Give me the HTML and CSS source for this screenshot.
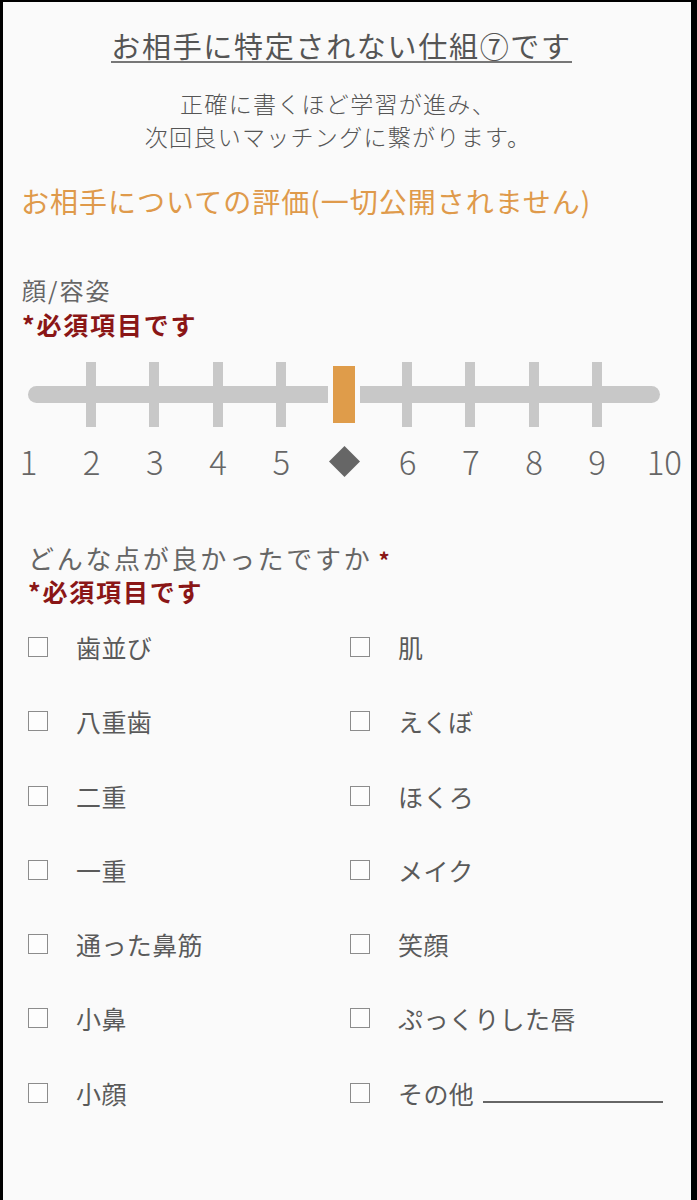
FILE: index.html
```html
<!DOCTYPE html>
<html lang="ja">
<head>
<meta charset="utf-8">
<title>評価</title>
<link rel="stylesheet" href="styles.css">
</head>
<body>
<div class="page">
  <header class="intro">
    <h1 class="title"><span>お相手に特定されない仕組⑦です</span></h1>
    <p class="lead">正確に書くほど学習が進み、<br>次回良いマッチングに繋がります。</p>
  </header>

  <h2 class="section">お相手についての評価(一切公開されません)</h2>

  <section class="field">
    <div class="label">顔/容姿</div>
    <div class="req req1">*必須項目です</div>
    <div class="slider">
      <span class="slot"></span>
      <span class="slot"><i class="tick"></i></span>
      <span class="slot"><i class="tick"></i></span>
      <span class="slot"><i class="tick"></i></span>
      <span class="slot"><i class="tick"></i></span>
      <span class="slot"><i class="thumb"></i></span>
      <span class="slot"><i class="tick"></i></span>
      <span class="slot"><i class="tick"></i></span>
      <span class="slot"><i class="tick"></i></span>
      <span class="slot"><i class="tick"></i></span>
      <span class="slot"></span>
    </div>
    <div class="scale">
      <span class="num">1</span>
      <span class="num">2</span>
      <span class="num">3</span>
      <span class="num">4</span>
      <span class="num">5</span>
      <span class="num"><svg class="diamond" width="31" height="31" viewBox="0 0 31 31"><polygon points="15.5,0 31,15.5 15.5,31 0,15.5" fill="#666"/></svg></span>
      <span class="num">6</span>
      <span class="num">7</span>
      <span class="num">8</span>
      <span class="num">9</span>
      <span class="num last">10</span>
    </div>
  </section>

  <section class="field checks-field">
    <div class="question">どんな点が良かったですか<span class="star">*</span></div>
    <div class="req req2">*必須項目です</div>
    <div class="checks">
      <label class="check"><span class="box"></span>歯並び</label>
      <label class="check"><span class="box"></span>肌</label>
      <label class="check"><span class="box"></span>八重歯</label>
      <label class="check"><span class="box"></span>えくぼ</label>
      <label class="check"><span class="box"></span>二重</label>
      <label class="check"><span class="box"></span>ほくろ</label>
      <label class="check"><span class="box"></span>一重</label>
      <label class="check"><span class="box"></span>メイク</label>
      <label class="check"><span class="box"></span>通った鼻筋</label>
      <label class="check"><span class="box"></span>笑顔</label>
      <label class="check"><span class="box"></span>小鼻</label>
      <label class="check"><span class="box"></span>ぷっくりした唇</label>
      <label class="check"><span class="box"></span>小顔</label>
      <label class="check"><span class="box"></span>その他<span class="blank"></span></label>
    </div>
  </section>
</div>
</body>
</html>
```

FILE: styles.css
```css
* { box-sizing: border-box; }

html, body {
  margin: 0;
  padding: 0;
  background: #000;
}

body {
  font-family: "Noto Sans CJK JP", "Noto Sans", sans-serif;
  color: #5c5c5c;
}

.page {
  margin: 2px 6px 0 3px;
  height: 1198px;
  overflow: hidden;
  background: #fafafa;
  padding-top: 27px;
}

.intro {
  text-align: center;
  padding-right: 11px;
}

.title {
  margin: 0;
  font-size: 29px;
  font-weight: 400;
  line-height: 32px;
  letter-spacing: 1.7px;
  color: #555;
}

.title span {
  display: inline-block;
  border-bottom: 2px solid #777;
}

.lead {
  margin: 24px 0 0;
  padding-right: 7px;
  font-size: 23px;
  font-weight: 300;
  line-height: 33px;
  letter-spacing: 1.3px;
  color: #555;
}

.section {
  margin: 30px 0 0 18px;
  font-size: 28px;
  font-weight: 400;
  line-height: 36px;
  letter-spacing: 1px;
  color: #df9a4b;
}

.field {
  margin-top: 55px;
}

.label {
  margin-left: 19px;
  font-size: 24px;
  line-height: 32px;
  letter-spacing: 2px;
  color: #666;
}

.req {
  margin-left: 19px;
  font-size: 25px;
  font-weight: 700;
  line-height: 32px;
  letter-spacing: 1.8px;
  color: #8a1616;
}

.req1 {
  margin-top: 2px;
}

.slider {
  position: relative;
  margin: 21px 0 0 9px;
  width: 664px;
  height: 66px;
  display: flex;
  justify-content: space-between;
  align-items: center;
}

.slider::before {
  content: "";
  position: absolute;
  left: 16px;
  right: 16px;
  top: 25px;
  height: 17px;
  border-radius: 9px;
  background: #c8c8c8;
}

.slot {
  position: relative;
  width: 32px;
  height: 66px;
  display: flex;
  justify-content: center;
  align-items: center;
}

.tick {
  display: block;
  width: 10px;
  height: 65px;
  background: #c8c8c8;
}

.thumb {
  display: block;
  width: 32px;
  height: 67px;
  background: #df9c4a;
  border: 5px solid #fafafa;
}

.scale {
  margin: 14px 0 0 5.5px;
  width: 672px;
  display: flex;
  justify-content: space-between;
  align-items: center;
  height: 40px;
}

.num {
  width: 40px;
  text-align: center;
  font-size: 33px;
  font-weight: 300;
  line-height: 40px;
  color: #666;
  display: flex;
  justify-content: center;
  align-items: center;
}

.num.last {
  padding-left: 8px;
}

.diamond {
  display: block;
}

.checks-field {
  margin-top: 61px;
}

.question {
  margin-left: 25px;
  font-size: 26px;
  line-height: 32px;
  letter-spacing: 2.7px;
  color: #666;
}

.star {
  margin-left: 6px;
  font-size: 22px;
  font-weight: 700;
  color: #8a1616;
}

.req2 {
  margin-left: 25px;
}

.checks {
  margin: 23px 0 0 25px;
  display: grid;
  grid-template-columns: 322px 1fr;
  row-gap: 40.3px;
}

.check {
  display: flex;
  align-items: center;
  height: 34px;
  font-size: 25px;
  letter-spacing: 0.4px;
  color: #5a5a5a;
}

.box {
  display: inline-block;
  width: 20px;
  height: 20px;
  border: 1.5px solid #8c8c8c;
  background: #fdfdfd;
  margin-right: 28px;
  flex: none;
}

.blank {
  display: inline-block;
  width: 180px;
  height: 20px;
  margin-left: 9px;
  border-bottom: 2px solid #666;
}
```
